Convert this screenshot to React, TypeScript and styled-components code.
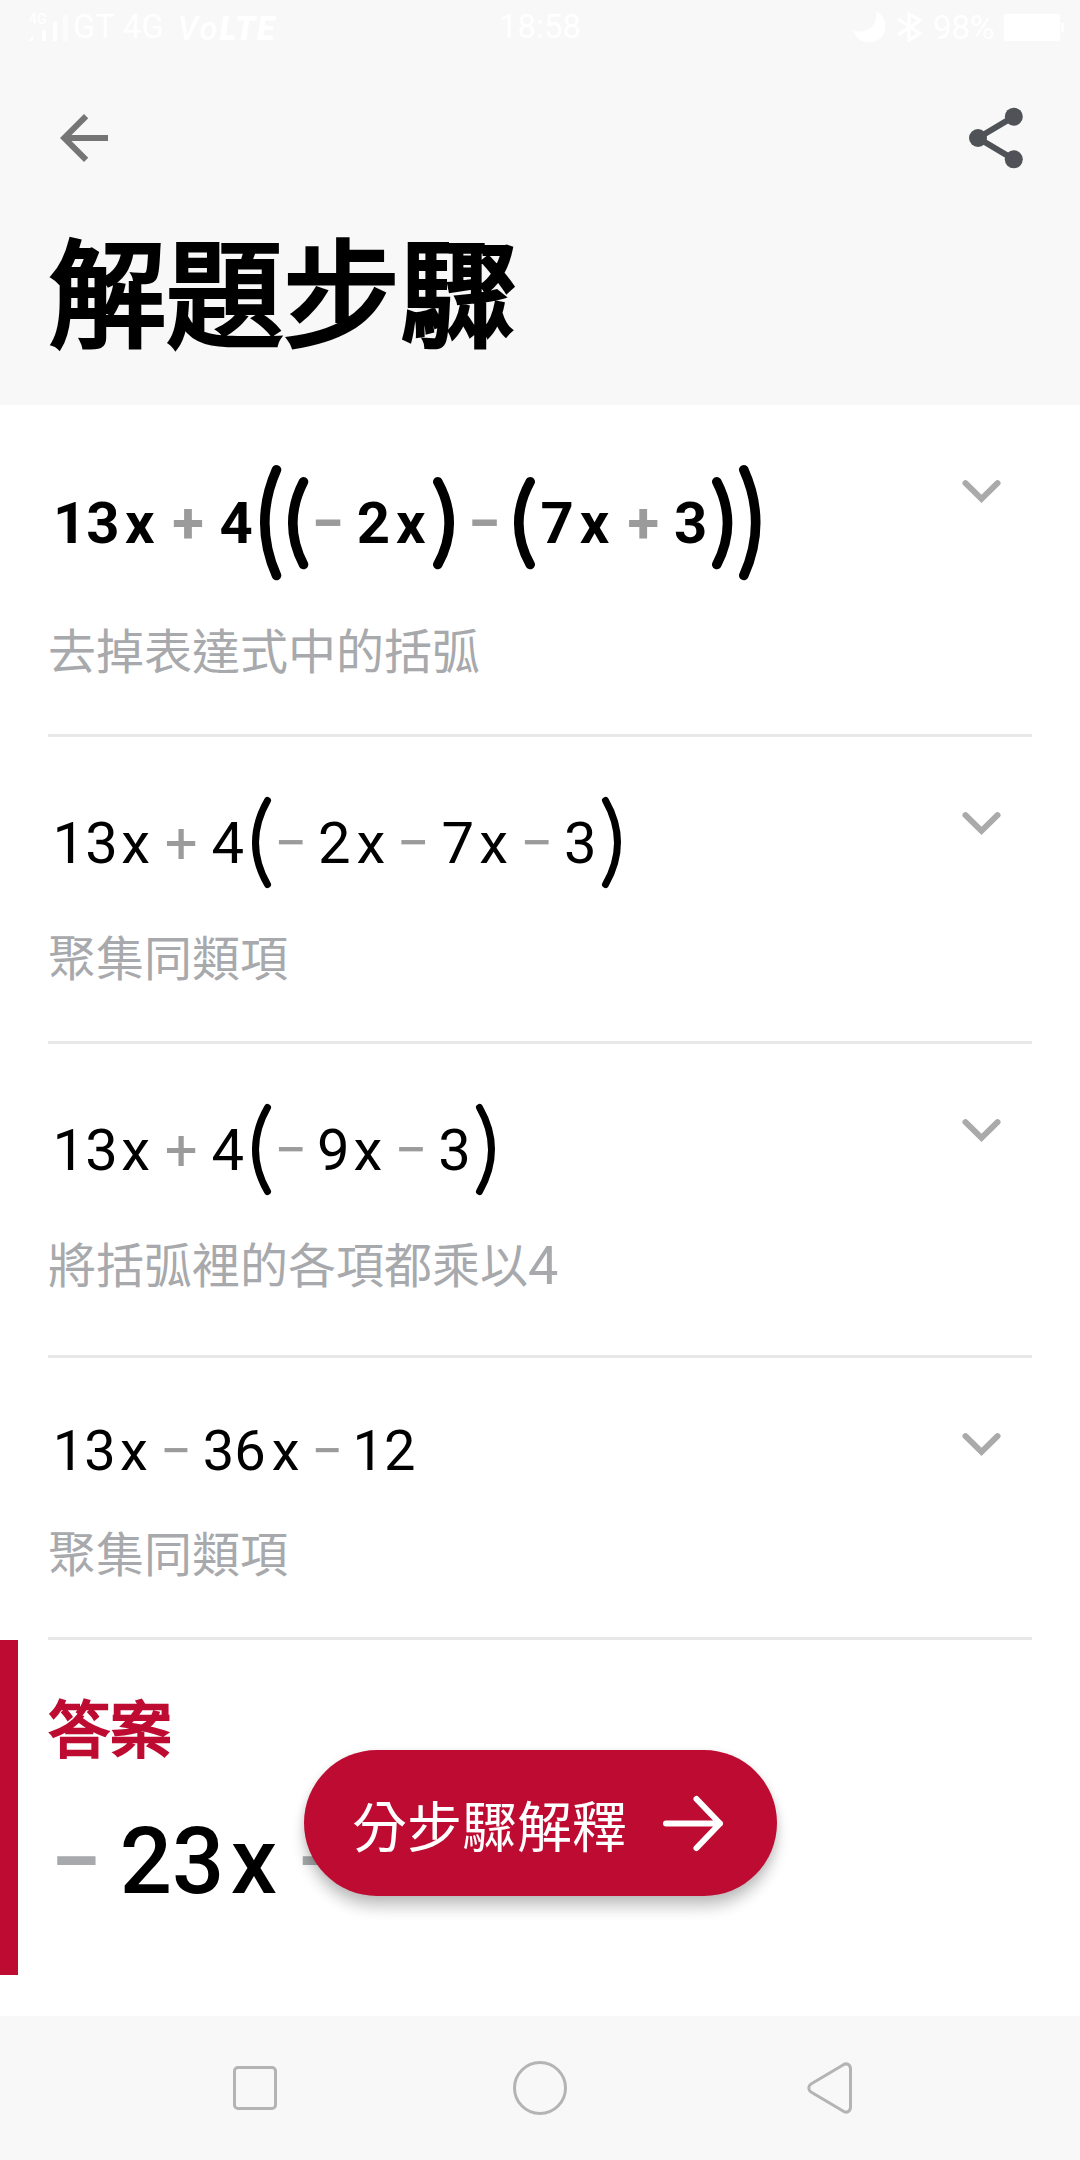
import React from "react";
import styled, { createGlobalStyle } from "styled-components";

const CJK = '"Noto Sans CJK TC", "Noto Sans CJK JP", sans-serif';
const RED = "#be0b31";
const GREY = "#a7a9ac";

const GlobalStyle = createGlobalStyle`
  *, *::before, *::after { box-sizing: border-box; }
  html, body { margin: 0; padding: 0; background: #fff; }
  body { font-family: Roboto, ${CJK}; color: #000; }
  svg { display: block; flex: none; overflow: visible; }
  button { border: 0; padding: 0; background: none; font: inherit; color: inherit; }
`;

const Screen = styled.div`
  width: 1080px;
  height: 2160px;
  display: flex;
  flex-direction: column;
  overflow: hidden;
  background: #fff;
`;

const Header = styled.header`
  height: 405px;
  flex: none;
  background: #f8f8f8;
`;

const StatusBar = styled.div`
  height: 54px;
  padding: 0 20px 0 29px;
  display: grid;
  grid-template-columns: 1fr auto 1fr;
  align-items: center;
  color: #fff;
  font-size: 32.5px;
  line-height: 54px;
`;

const StatusGroup = styled.div<{ $end?: boolean }>`
  display: flex;
  align-items: center;
  justify-content: ${(p) => (p.$end ? "flex-end" : "flex-start")};
  height: 54px;
  white-space: nowrap;
`;

const Signal = styled.div`
  width: 40px;
  margin-right: 4px;
  display: flex;
  flex-direction: column;
`;

const Network = styled.span`
  font-size: 14px;
  line-height: 12px;
  height: 8px;
  font-weight: 500;
`;

const Carrier = styled.span`
  letter-spacing: 0.3px;
`;

const Clock = styled.span`
  padding-right: 9px;
  font-size: 33px;
`;

const VoLte = styled.span`
  margin-left: 14px;
  padding-top: 3px;
  font-style: italic;
  font-weight: 500;
  letter-spacing: 2px;
  b { font-weight: 900; }
`;

const Percent = styled.span`
  margin: 0 10px 0 12px;
  font-size: 34px;
  letter-spacing: -0.6px;
`;

const BluetoothIcon = styled.svg`
  margin-left: 12px;
`;

const Toolbar = styled.div`
  height: 168px;
  padding: 0 60px 0 48px;
  display: flex;
  align-items: center;
  justify-content: space-between;
`;

const IconButton = styled.button`
  width: 72px;
  height: 72px;
  display: grid;
  place-items: center;
`;

const Title = styled.h1`
  margin: -1px 0 0;
  padding-left: 49px;
  font-family: ${CJK};
  font-size: 117px;
  font-weight: 400;
  -webkit-text-stroke: 4.2px #000;
  line-height: 132px;
`;

const Steps = styled.main`
  flex: none;
  display: flex;
  flex-direction: column;
`;

const Step = styled.section`
  margin: 0 48px;
  padding: 60px 0 54px;
  border-bottom: 3px solid #e8e8e8;
  display: flex;
  justify-content: space-between;
  align-items: flex-start;
  & > svg { margin: 15px 31px 0 0; }
`;

const StepBody = styled.div`
  display: flex;
  flex-direction: column;
`;

const Formula = styled.div<{ $height: number; $size: number; $weight: number }>`
  height: ${(p) => p.$height}px;
  display: flex;
  align-items: center;
  font-family: Roboto, sans-serif;
  font-size: ${(p) => p.$size}px;
  font-weight: ${(p) => p.$weight};
  line-height: ${(p) => p.$size}px;
  white-space: nowrap;
`;

const Term = styled.span<{ $gap: number }>`
  margin-left: ${(p) => p.$gap}px;
`;

const Operator = styled.span<{ $gap: number; $width: number; $color: string }>`
  margin-left: ${(p) => p.$gap}px;
  width: ${(p) => p.$width}px;
  display: flex;
  justify-content: center;
  color: ${(p) => p.$color};
`;

const Bracket = styled.span<{ $gap: number }>`
  margin-left: ${(p) => p.$gap}px;
`;

const Caption = styled.p<{ $height?: number }>`
  margin: 32px 0 0;
  height: ${(p) => p.$height ?? 67}px;
  font-family: ${CJK};
  font-size: 48px;
  line-height: 70px;
  color: ${GREY};
`;

const Digit = styled.span`
  font-family: Roboto, sans-serif;
  font-size: 54px;
  line-height: 0;
  vertical-align: -1px;
`;

const Answer = styled.section`
  height: 335px;
  flex: none;
  padding: 46px 30px 0;
  border-left: 18px solid ${RED};
`;

const AnswerLabel = styled.h2`
  margin: 0;
  font-family: ${CJK};
  font-size: 62px;
  font-weight: 400;
  -webkit-text-stroke: 2.4px ${RED};
  line-height: 80px;
  color: ${RED};
`;

const ExplainButton = styled.button`
  position: absolute;
  left: 304px;
  top: 1750px;
  width: 473px;
  height: 146px;
  padding: 0 54px 0 48px;
  display: flex;
  align-items: center;
  justify-content: space-between;
  border-radius: 73px;
  background: ${RED};
  color: #fff;
  font-family: ${CJK};
  font-size: 55px;
  line-height: 80px;
  white-space: nowrap;
  box-shadow: 0 12px 14px rgba(0, 0, 0, 0.2), 0 2px 8px rgba(0, 0, 0, 0.1);
`;

const NavBar = styled.nav`
  height: 144px;
  margin-top: auto;
  flex: none;
  padding: 0 227px 0 233px;
  display: grid;
  grid-template-columns: 280px 1fr auto;
  align-items: center;
  background: #f8f8f8;
`;

type Part =
  | { t: "term"; v: string; gap: number }
  | { t: "op"; v: string; gap: number; w: number }
  | { t: "open" | "close"; gap: number; w: number; h: number };

const term = (v: string, gap: number): Part => ({ t: "term", v, gap });
const plus = (gap: number, w = 28): Part => ({ t: "op", v: "+", gap, w });
const minus = (gap: number, w = 24): Part => ({ t: "op", v: "−", gap, w });
const open = (gap: number, w = 19, h = 91): Part => ({ t: "open", gap, w, h });
const close = (gap: number, w = 19, h = 91): Part => ({ t: "close", gap, w, h });

interface StepData {
  parts: Part[];
  height: number;
  size?: number;
  bold?: boolean;
  caption: React.ReactNode;
  captionHeight?: number;
}

const STEPS: StepData[] = [
  {
    bold: true,
    height: 116,
    parts: [
      term("13", 5), term("x", 5.5), plus(18.9, 29), term("4", 17),
      open(7.3, 21.3, 115.3), open(6.7, 20.3, 92.3), minus(7, 25), term("2", 16.5), term("x", 5.8),
      close(8, 21, 92.3), minus(17.7, 24.3), open(18, 21, 92.3), term("7", 5), term("x", 6),
      plus(19.7, 28.6), term("3", 16.6), close(4.7, 20.3, 92.3), close(6.5, 21.5, 115.3),
    ],
    caption: "去掉表達式中的括弧",
  },
  {
    height: 91,
    parts: [
      term("13", 4.6), term("x", 3.5), plus(17), term("4", 16.5), open(8), minus(7.3),
      term("2", 15.4), term("x", 6.1), minus(15.7), term("7", 16.4), term("x", 5.1),
      minus(16.7), term("3", 15.3), close(5),
    ],
    caption: "聚集同類項",
  },
  {
    height: 91,
    parts: [
      term("13", 4.6), term("x", 3.5), plus(17), term("4", 16.5), open(8), minus(7.3),
      term("9", 14.5), term("x", 4), minus(16.5), term("3", 15.3), close(4.8),
    ],
    caption: <>將括弧裡的各項都乘以<Digit>4</Digit></>,
    captionHeight: 74,
  },
  {
    height: 66,
    size: 56,
    parts: [
      term("13", 4.7), term("x", 4.4), minus(16.5, 23), term("36", 15.4), term("x", 6.2),
      minus(16, 23), term("12", 13.9),
    ],
    caption: "聚集同類項",
  },
];

const ANSWER: Part[] = [minus(9, 38), term("23", 24.7), term("x", 6.5), minus(25.5, 38)];

function Paren({ side, w, h, stroke }: { side: "open" | "close"; w: number; h: number; stroke: number }) {
  const tip = w - stroke / 2;
  const bow = stroke - tip;
  const at = (x: number) => (side === "open" ? x : w - x);
  return (
    <svg width={w} height={h} viewBox={`0 0 ${w} ${h}`} fill="none" stroke="#000" strokeWidth={stroke} strokeLinecap="round">
      <path d={`M${at(tip)} ${stroke / 2}Q${at(bow)} ${h / 2} ${at(tip)} ${h - stroke / 2}`} />
    </svg>
  );
}

function Parts({ parts, stroke, color }: { parts: Part[]; stroke: number; color: string }) {
  return (
    <>
      {parts.map((p, i) => {
        if (p.t === "term") return <Term key={i} $gap={p.gap}>{p.v}</Term>;
        if (p.t === "op") return <Operator key={i} $gap={p.gap} $width={p.w} $color={color}>{p.v}</Operator>;
        return (
          <Bracket key={i} $gap={p.gap}>
            <Paren side={p.t} w={p.w} h={p.h} stroke={stroke} />
          </Bracket>
        );
      })}
    </>
  );
}

const Chevron = () => (
  <svg width="39" height="24" viewBox="0 0 39 24" fill="none" stroke="#aaa" strokeWidth="6" strokeLinecap="round">
    <path d="M3.500 3.200L19.500 18.800L35.500 3.200" />
  </svg>
);

export default function App() {
  return (
    <>
      <GlobalStyle />
      <Screen>
        <Header>
          <StatusBar>
            <StatusGroup>
              <Signal>
                <Network>4G</Network>
                <svg width="40" height="20" viewBox="0 0 40 20" fill="#fff">
                  <path d="M0 20L4 14V20ZM13 9h4v11h-4zM24 1h4v19h-4z" />
                  <path opacity="0.5" d="M34 -6h5v26h-5z" />
                </svg>
              </Signal>
              <Carrier>GT 4G</Carrier>
              <VoLte>Vo<b>LTE</b></VoLte>
            </StatusGroup>
            <Clock>18:58</Clock>
            <StatusGroup $end>
              <svg width="32" height="32" viewBox="0 0 32 32" fill="#fff">
                <path d="M23 0A16.5 16.5 0 1 1 0 19C11 25 26 15 23 0Z" />
              </svg>
              <BluetoothIcon width="24" height="30" viewBox="0 0 24 30" fill="none" stroke="#fff" strokeWidth="3">
                <path d="M1 7L23 21.5L12 28V2L23 8.500L1 23" />
              </BluetoothIcon>
              <Percent>98%</Percent>
              <svg width="56" height="27" viewBox="0 0 56 27" fill="#fff">
                <rect width="56" height="27" rx="2" />
                <rect x="57" y="9" width="3" height="9" />
              </svg>
            </StatusGroup>
          </StatusBar>
          <Toolbar>
            <IconButton aria-label="返回">
              <svg width="72" height="72" viewBox="0 0 24 24" fill="#757575">
                <path d="M20 11H7.830l5.590-5.590L12 4l-8 8 8 8 1.410-1.410L7.830 13H20v-2z" />
              </svg>
            </IconButton>
            <IconButton aria-label="分享">
              <svg width="72" height="72" viewBox="0 0 72 72" fill="#4f5257">
                <path d="M65.800 14.700L30 36L65.800 57.300" fill="none" stroke="#4f5257" strokeWidth="6" />
                <circle cx="65.800" cy="14.700" r="9" />
                <circle cx="30" cy="36" r="9" />
                <circle cx="65.800" cy="57.300" r="9" />
              </svg>
            </IconButton>
          </Toolbar>
          <Title>解題步驟</Title>
        </Header>

        <Steps>
          {STEPS.map((s, i) => (
            <Step key={i}>
              <StepBody>
                <Formula $height={s.height} $size={s.size ?? 58} $weight={s.bold ? 700 : 400}>
                  <Parts parts={s.parts} stroke={s.bold ? 9.6 : 7} color="#9b9b9b" />
                </Formula>
                <Caption $height={s.captionHeight}>{s.caption}</Caption>
              </StepBody>
              <Chevron />
            </Step>
          ))}
        </Steps>

        <Answer>
          <AnswerLabel>答案</AnswerLabel>
          <Formula $height={191} $size={92} $weight={500}>
            <Parts parts={ANSWER} stroke={10} color={GREY} />
          </Formula>
        </Answer>

        <ExplainButton>
          分步驟解釋
          <svg width="60" height="55" viewBox="0 0 60 55" fill="none" stroke="#fff" strokeWidth="6" strokeLinecap="round" strokeLinejoin="round">
            <path d="M3 27.500H57M33.500 3L57 27.500L33.500 52" />
          </svg>
        </ExplainButton>

        <NavBar>
          <svg width="44" height="44" viewBox="0 0 44 44" fill="none" stroke="#b4b4b4" strokeWidth="3">
            <rect x="1.500" y="1.500" width="41" height="41" rx="3.500" />
          </svg>
          <svg width="54" height="54" viewBox="0 0 54 54" fill="none" stroke="#b4b4b4" strokeWidth="3">
            <circle cx="27" cy="27" r="25.500" />
          </svg>
          <svg width="46" height="52" viewBox="0 0 46 52" fill="none" stroke="#b4b4b4" strokeWidth="3" strokeLinejoin="round">
            <path d="M43.500 7V45C43.500 49.500 39.500 51.500 36 49L4 30C1 28 1 24 4 22L36 3C39.500 0.500 43.500 2.500 43.500 7Z" />
          </svg>
        </NavBar>
      </Screen>
    </>
  );
}
